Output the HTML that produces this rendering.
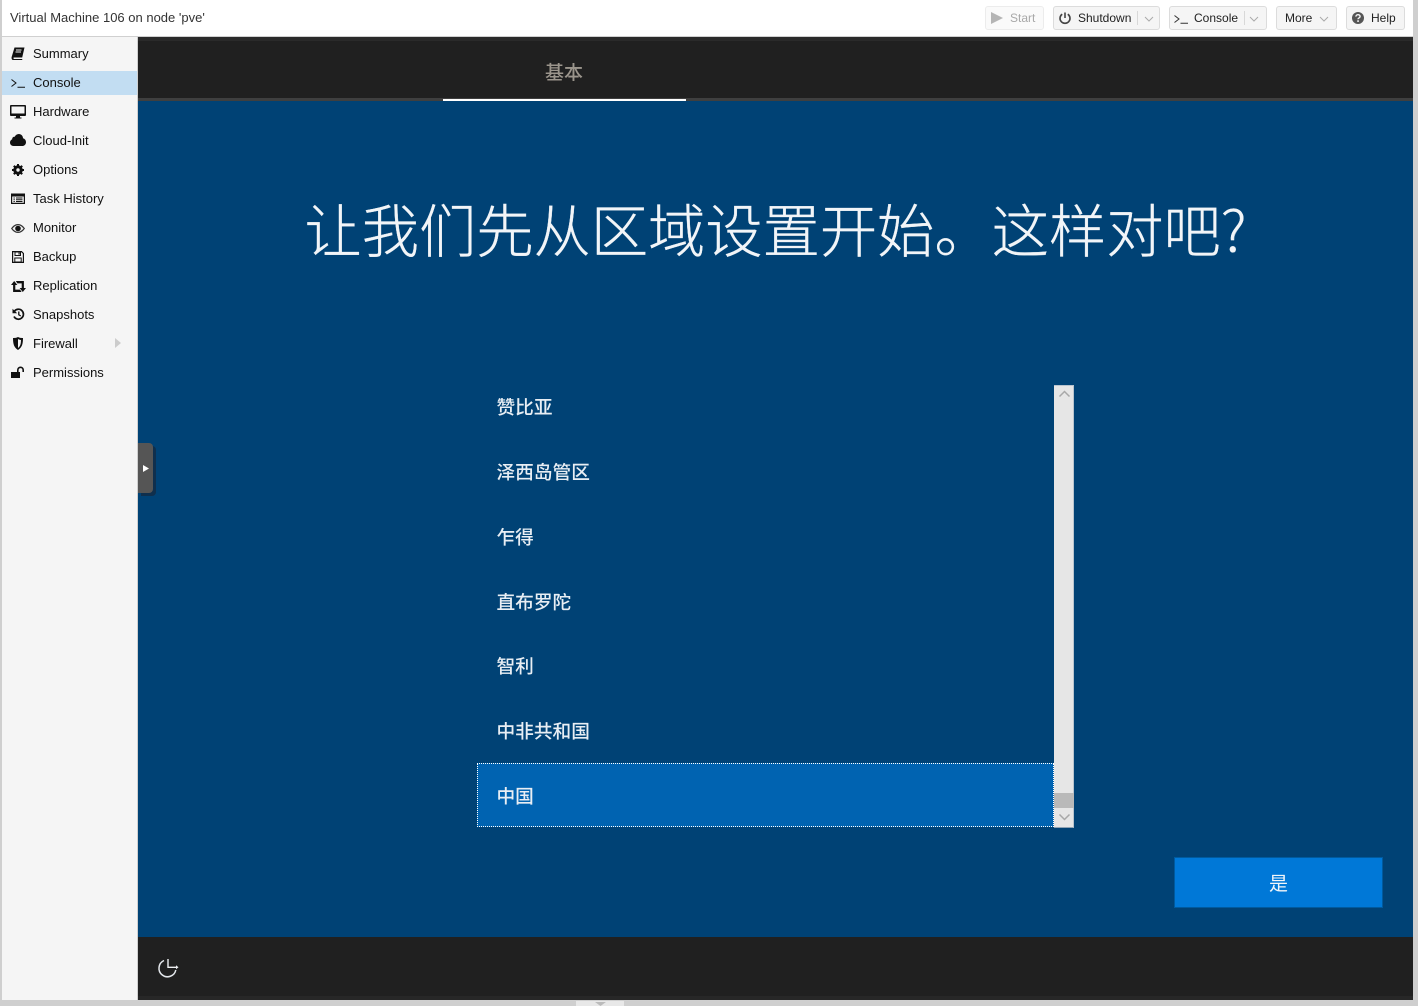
<!DOCTYPE html>
<html lang="zh"><head><meta charset="utf-8"><title>Virtual Machine 106</title>
<style>
html,body{margin:0;padding:0;width:1418px;height:1006px;overflow:hidden;background:#cfcfcf}
*{box-sizing:border-box}
body{position:relative;font-family:"Liberation Sans",Arial,sans-serif;font-size:12px;color:#000}
.a{position:absolute}
.t{position:absolute;white-space:nowrap;line-height:16px}
.btn{position:absolute;top:6px;height:24px;background:#f5f5f5;border:1px solid #dcdcdc;border-radius:3px}
.btn .t{top:3px;color:#222}
.sep{position:absolute;top:4px;width:1px;height:14px;background:#d8d8d8}
.i{position:absolute;overflow:visible}
.nav{position:absolute;left:33px;white-space:nowrap;line-height:16px;color:#111;font-size:13px}
.li{position:absolute;left:496.5px;white-space:nowrap;color:#e8eef4;font:500 18.7px/26px "Noto Sans CJK SC",sans-serif}
</style></head><body>
<div class="a" style="left:2px;top:0;width:1411px;height:36px;background:#fff"></div>
<div class="t" style="left:10px;top:10px;color:#333;font-size:13px">Virtual Machine 106 on node 'pve'</div>

<div class="btn" style="left:985px;width:59px;background:#fafafa;border-color:#ececec">
<svg class="i" style="left:5px;top:5px" width="12" height="12" viewBox="0 0 12 12"><path d="M0 0 L12 6 L0 12Z" fill="#b5b5b5"/></svg>
<span class="t" style="left:24px;color:#a8a8a8">Start</span></div>
<div class="btn" style="left:1053px;width:107px">
<svg class="i" style="left:5px;top:5px" width="12" height="12" viewBox="0 0 12 12"><path d="M3.2 2.2A5 5 0 1 0 8.8 2.2M6 .5V6" fill="none" stroke="#444" stroke-width="1.6"/></svg>
<span class="t" style="left:24px">Shutdown</span><i class="sep" style="left:83px"></i>
<svg class="i" style="left:90px;top:9px" width="10" height="6" viewBox="0 0 10 6"><path d="M1 1L5 5L9 1" fill="none" stroke="#aaa"/></svg></div>
<div class="btn" style="left:1169px;width:98px">
<svg class="i" style="left:4px;top:8px" width="14" height="9" viewBox="0 0 14 9"><path d="M.5 .5L5 4L.5 7.500M6.500 8.300H14" fill="none" stroke="#333" stroke-width="1"/></svg>
<span class="t" style="left:24px">Console</span><i class="sep" style="left:74px"></i>
<svg class="i" style="left:79px;top:9px" width="10" height="6" viewBox="0 0 10 6"><path d="M1 1L5 5L9 1" fill="none" stroke="#aaa"/></svg></div>
<div class="btn" style="left:1276px;width:61px">
<span class="t" style="left:8px">More</span>
<svg class="i" style="left:42px;top:9px" width="10" height="6" viewBox="0 0 10 6"><path d="M1 1L5 5L9 1" fill="none" stroke="#aaa"/></svg></div>
<div class="btn" style="left:1346px;width:59px">
<svg class="i" style="left:5px;top:5px" width="12" height="12" viewBox="0 0 12 12"><circle cx="6" cy="6" r="6" fill="#555"/><path d="M3.9 4.6C4 2 8.2 2.2 8.1 4.6C8 6 6 5.900 6 7.300" fill="none" stroke="#f5f5f5" stroke-width="1.400"/><rect x="5.200" y="8.300" width="1.700" height="1.600" fill="#f5f5f5"/></svg>
<span class="t" style="left:24px">Help</span></div>

<div class="a" style="left:2px;top:36px;width:135px;height:964px;background:#f5f5f5;border-top:1px solid #d0d0d0"></div>
<div class="a" style="left:137px;top:36px;width:1px;height:964px;background:#cfcfcf"></div>
<div class="a" style="left:2px;top:71px;width:135px;height:24px;background:#c2ddf2"></div>

<svg class="i" style="left:11px;top:47px" width="14" height="13" viewBox="0 0 14 13"><path d="M3.500 .5H13.500L11.200 10.500H2.800C2.200 10.500 2.500 12 3 12H11.500L11 13H2C.5 13 .3 10.500 .8 9.500Z" fill="#111"/><path d="M5 3H10.500M4.500 5H10" stroke="#f5f5f5"/></svg>
<div class="nav" style="top:46px">Summary</div>
<svg class="i" style="left:11px;top:79px" width="14" height="9" viewBox="0 0 14 9"><path d="M.5 .5L5 4L.5 7.500M6.500 8.300H14" fill="none" stroke="#111" stroke-width="1"/></svg>
<div class="nav" style="top:75px">Console</div>
<svg class="i" style="left:10px;top:105px" width="16" height="14" viewBox="0 0 16 14"><path d="M1 0H15C15.600 0 16 .4 16 1V10C16 10.600 15.600 11 15 11H10V12.500H11.500V13.500H4.500V12.500H6V11H1C.4 11 0 10.600 0 10V1C0 .4.4 0 1 0ZM1.500 1.500V8.500H14.500V1.500Z" fill="#111" fill-rule="evenodd"/></svg>
<div class="nav" style="top:104px">Hardware</div>
<svg class="i" style="left:10px;top:134px" width="16" height="12" viewBox="0 0 16 12"><path d="M3.500 12C1.500 12 0 10.500 0 8.500C0 7 1 5.800 2.200 5.300C2.200 5.100 2.200 5 2.200 4.800C2.200 3.500 3.500 2.500 4.700 2.800C5.500 1.100 7 0 8.800 0C11.200 0 13 1.900 13 4.300C14.800 4.800 16 6.300 16 8.200C16 10.300 14.300 12 12.200 12Z" fill="#111"/></svg>
<div class="nav" style="top:133px">Cloud-Init</div>
<svg class="i" style="left:12px;top:164px" width="12" height="12" viewBox="0 0 12 12"><circle cx="6" cy="6" r="3.600" fill="none" stroke="#111" stroke-width="2.400"/><path d="M6 0V12M0 6H12M1.800 1.800L10.200 10.200M10.200 1.800L1.800 10.200" stroke="#111" stroke-width="2"/><circle cx="6" cy="6" r="1.700" fill="#f5f5f5"/></svg>
<div class="nav" style="top:162px">Options</div>
<svg class="i" style="left:11px;top:193px" width="14" height="11" viewBox="0 0 14 11"><path d="M0 .5H14V11H0ZM1.200 3.500V9.800H12.800V3.500Z" fill="#111" fill-rule="evenodd"/><path d="M2.500 5H3.800M5 5H11.500M2.500 6.800H3.800M5 6.800H11.500M2.500 8.500H3.800M5 8.500H11.500" stroke="#111" stroke-width="1"/></svg>
<div class="nav" style="top:191px">Task History</div>
<svg class="i" style="left:11px;top:224px" width="14" height="9" viewBox="0 0 14 9"><path d="M0 4.500C2 1.500 4.500 0 7 0S12 1.500 14 4.500C12 7.500 9.500 9 7 9S2 7.500 0 4.500Z" fill="#333"/><path d="M1.500 4.500C3 6.500 5 7.800 7 7.800S11 6.500 12.500 4.500C11 2.500 9 1.200 7 1.200S3 2.500 1.500 4.500Z" fill="#eee"/><circle cx="7" cy="4.500" r="2.800" fill="#111"/></svg>
<div class="nav" style="top:220px">Monitor</div>
<svg class="i" style="left:12px;top:251px" width="12" height="12" viewBox="0 0 12 12"><path d="M.6.6H9.500L11.400 2.500V11.400H.6Z" fill="none" stroke="#111" stroke-width="1.200"/><path d="M3 1H8.500V4.500H3ZM2.800 7H9.200V11H2.800Z" fill="none" stroke="#111"/><rect x="6.500" y="1.600" width="1.200" height="2" fill="#111"/></svg>
<div class="nav" style="top:249px">Backup</div>
<svg class="i" style="left:11px;top:281px" width="15" height="11" viewBox="0 0 15 11"><path d="M3.200 0L6.400 4H4.300V8.600H9L10.600 11H2.100V4H0Z" fill="#111"/><path d="M11.800 11L8.600 7H10.700V2.400H6.400L4.800 0H12.900V7H15Z" fill="#111"/></svg>
<div class="nav" style="top:278px">Replication</div>
<svg class="i" style="left:12px;top:308px" width="13" height="13" viewBox="0 0 13 13"><path d="M2.300 3.400A5 5 0 1 1 2 8.500" fill="none" stroke="#111" stroke-width="1.700"/><path d="M.5 .8L5.200 5.200H.5Z" fill="#111"/><path d="M6.800 3.500V6.800L8.800 8" fill="none" stroke="#111" stroke-width="1.300"/></svg>
<div class="nav" style="top:307px">Snapshots</div>
<svg class="i" style="left:13px;top:337px" width="10" height="13" viewBox="0 0 10 13"><path d="M0 1C3 1 4 .5 5 0C6 .5 7 1 10 1C10 7 9 10.500 5 13C1 10.500 0 7 0 1Z" fill="#111"/><path d="M5 2V11C7.300 9.300 7.900 7 8 3C6.800 2.900 5.800 2.500 5 2Z" fill="#f5f5f5"/></svg>
<div class="nav" style="top:336px">Firewall</div>
<svg class="i" style="left:115px;top:338px" width="6" height="10" viewBox="0 0 6 10"><path d="M0 0L6 5L0 10Z" fill="#ccc"/></svg>
<svg class="i" style="left:11px;top:367px" width="14" height="11" viewBox="0 0 14 11"><rect x="0" y="5" width="9" height="6" fill="#111"/><path d="M6.800 5.500V3A2.700 2.700 0 0 1 12.200 3V5" fill="none" stroke="#111" stroke-width="1.600"/></svg>
<div class="nav" style="top:365px">Permissions</div>

<div class="a" style="left:138px;top:37px;width:1275px;height:963px;background:#202020"></div>
<div class="a" style="left:138px;top:37px;width:1275px;height:4px;background:#2a2a2a"></div>
<div class="a" style="left:138px;top:98px;width:1275px;height:3px;background:#3f3f3f"></div>
<div class="a" style="left:443px;top:99px;width:243px;height:2px;background:#fff"></div>
<div class="t" style="left:545px;top:59px;font:500 19px/26px 'Noto Sans CJK SC',sans-serif;color:#9b958c">基本</div>
<div class="a" style="left:138px;top:101px;width:1275px;height:836px;background:#004275"></div>
<div class="a" style="left:138px;top:996px;width:1275px;height:4px;background:#272727"></div>

<div class="t" style="left:304.500px;top:188px;font:300 57.280px/80px 'Noto Sans CJK SC',sans-serif;color:#f2f5f8;-webkit-text-stroke:.3px #f2f5f8">让我们先从区域设置开始。这样对吧?</div>

<div class="li" style="top:394px">赞比亚</div>
<div class="li" style="top:459px">泽西岛管区</div>
<div class="li" style="top:524px">乍得</div>
<div class="li" style="top:589px">直布罗陀</div>
<div class="li" style="top:653px">智利</div>
<div class="li" style="top:718px">中非共和国</div>
<div class="a" style="left:477px;top:763px;width:577px;height:64px;background:#0063b1;border:1px dotted #fff"></div>
<div class="li" style="top:783px">中国</div>

<div class="a" style="left:1054px;top:385px;width:20px;height:443px;background:#e6e6e6;border:1px solid #b8c4cf;border-left:0;border-bottom-color:#8fa3b5"></div>
<div class="a" style="left:1054px;top:793px;width:20px;height:15px;background:#b9b9b9"></div>
<svg class="i" style="left:1058px;top:390px" width="13" height="8" viewBox="0 0 13 8"><path d="M1.500 6.500L6.500 1.500L11.500 6.500" fill="none" stroke="#a8a8a8" stroke-width="1.500"/></svg>
<svg class="i" style="left:1058px;top:813px" width="13" height="8" viewBox="0 0 13 8"><path d="M1.500 1.500L6.500 6.500L11.500 1.500" fill="none" stroke="#a8a8a8" stroke-width="1.500"/></svg>

<div class="a" style="left:1174px;top:857px;width:209px;height:51px;background:#0078d7;border:1px solid #005a9e"></div>
<div class="t" style="left:1269px;top:870px;font:400 19px/26px 'Noto Sans CJK SC',sans-serif;color:#f2f6fa">是</div>

<div class="a" style="left:138px;top:443px;width:15px;height:50px;background:#555;border-radius:0 4px 4px 0;box-shadow:3px 3px 0 #0f2f4d"></div>
<svg class="i" style="left:143px;top:465px" width="6" height="7" viewBox="0 0 6 7"><path d="M0 0L6 3.500L0 7Z" fill="#fff"/></svg>

<svg class="i" style="left:157px;top:959px" width="22" height="19" viewBox="0 0 22 19"><path d="M7 1.500A8.500 8.500 0 1 0 18.800 11" fill="none" stroke="#e4e8ec" stroke-width="1.500"/><path d="M11 0V8.300H20.500" fill="none" stroke="#eef0f2" stroke-width="1.400"/><path d="M19 6.300L21.500 8.300L19 10.300Z" fill="#eef0f2"/></svg>

<div class="a" style="left:576px;top:1001px;width:48px;height:5px;background:#e8e8e8"></div>
<svg class="i" style="left:595px;top:1002px" width="11" height="4" viewBox="0 0 11 4"><path d="M0 0L5.500 4L11 0Z" fill="#bbb"/></svg>
</body></html>
